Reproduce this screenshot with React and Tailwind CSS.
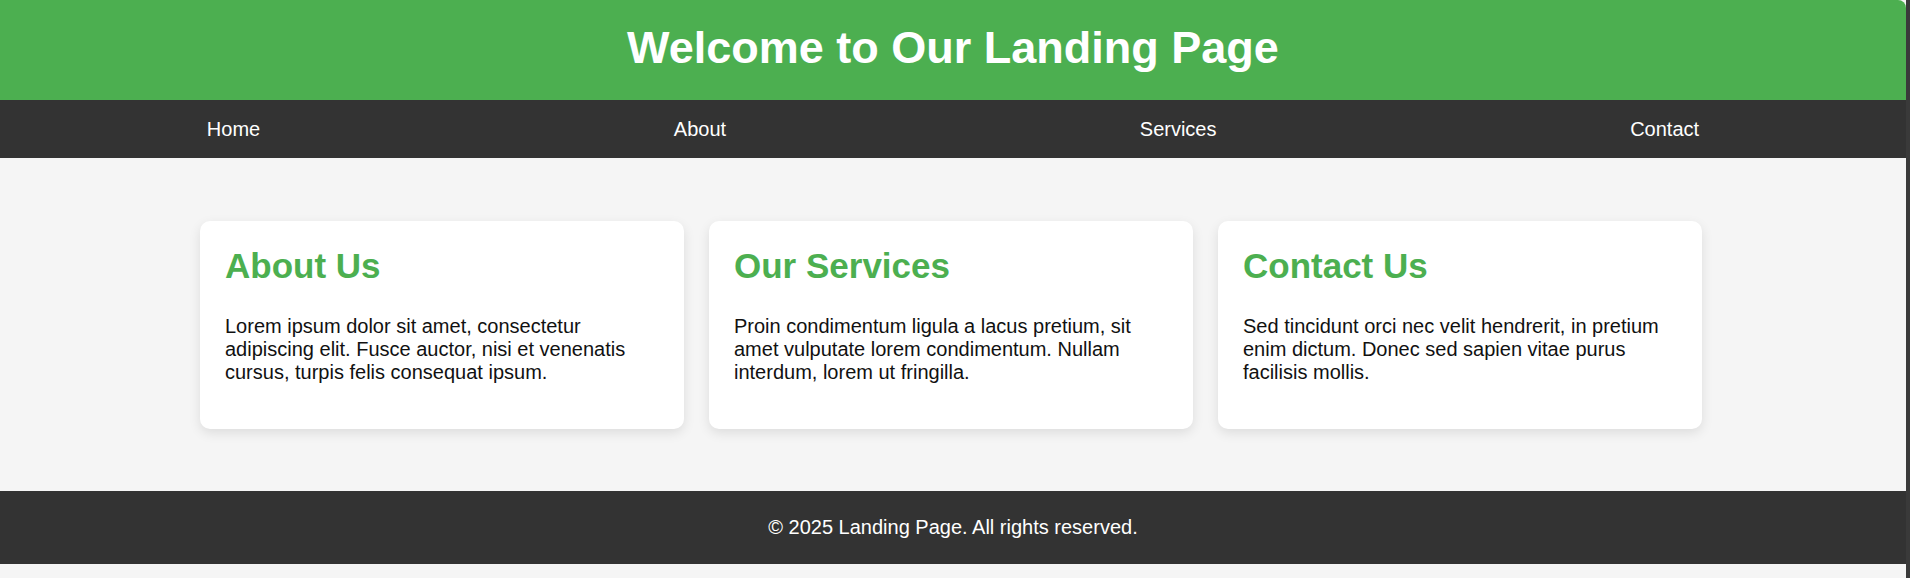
const links = ['Home', 'About', 'Services', 'Contact'];

const cards = [
  {
    title: 'About Us',
    text: 'Lorem ipsum dolor sit amet, consectetur adipiscing elit. Fusce auctor, nisi et venenatis cursus, turpis felis consequat ipsum.',
  },
  {
    title: 'Our Services',
    text: 'Proin condimentum ligula a lacus pretium, sit amet vulputate lorem condimentum. Nullam interdum, lorem ut fringilla.',
  },
  {
    title: 'Contact Us',
    text: 'Sed tincidunt orci nec velit hendrerit, in pretium enim dictum. Donec sed sapien vitae purus facilisis mollis.',
  },
];

export default function App() {
  return (
    <div className="flex min-h-screen bg-[#3a3a3a] font-['Liberation_Sans',Arial,sans-serif]">
      <div className="flex-1 bg-[#f5f5f5]">
        <header className="h-[100px] rounded-tr-[8px] bg-[#4caf50] pt-[22px] text-center">
          <h1 className="text-[45px] font-bold leading-[52px] text-white">Welcome to Our Landing Page</h1>
        </header>

        <nav className="flex h-[58px] items-center justify-around bg-[#333333]">
          {links.map((l) => (
            <a key={l} href="#" className="text-[20px] leading-[23px] text-white">
              {l}
            </a>
          ))}
        </nav>

        <main className="flex gap-[25px] pb-[62px] pl-[200px] pt-[63px]">
          {cards.map((c) => (
            <section
              key={c.title}
              className="w-[484px] rounded-[10px] bg-white p-[25px] shadow-[0_4px_12px_rgba(0,0,0,0.1)]"
            >
              <h2 className="mb-[29px] text-[35px] font-bold leading-[40px] text-[#4caf50]">{c.title}</h2>
              <p className="mb-[20px] text-[20px] leading-[23px] text-[#111111]">{c.text}</p>
            </section>
          ))}
        </main>

        <footer className="bg-[#333333] py-[25px] text-center">
          <p className="text-[20px] leading-[23px] text-white">© 2025 Landing Page. All rights reserved.</p>
        </footer>
      </div>
      <div className="w-[4px]" />
    </div>
  );
}
